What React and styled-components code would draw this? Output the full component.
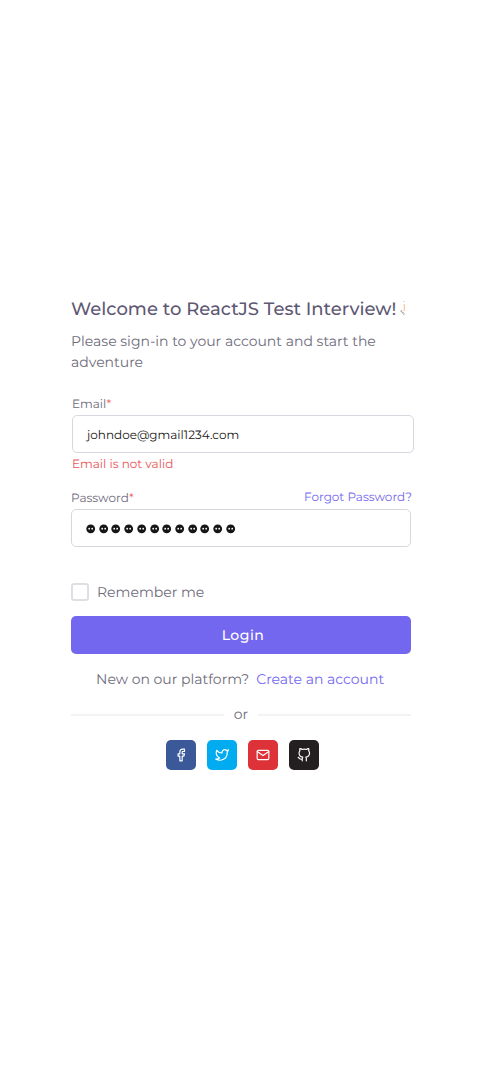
import React from "react";
import styled, { createGlobalStyle } from "styled-components";
import { FiFacebook, FiTwitter, FiMail, FiGithub } from "react-icons/fi";

const Global = createGlobalStyle`
  *, *::before, *::after { box-sizing: border-box; }
  body {
    margin: 0;
    background: #fff;
    font-family: Montserrat, Inter, sans-serif;
    color: #6e6b7b;
    text-rendering: geometricPrecision;
  }
`;
const Page = styled.main`
  min-height: 1080px;
  padding: 297px 73px 0 71px;
  display: flex;
  flex-direction: column;
`;
const Phrase = styled.span`
  white-space: nowrap;
  letter-spacing: ${(p) => p.$track || 0}px;
`;
const Title = styled.h1`
  margin: 0;
  height: 24px;
  display: flex;
  align-items: center;
  gap: 4px;
  font-size: 18px;
  line-height: 24px;
  font-weight: 500;
  color: #5e5873;
`;
const Spark = styled.svg`
  width: 5px;
  height: 18px;
  flex: none;
`;
const Intro = styled.p`
  margin: 10px 0 0;
  font-size: 14px;
  line-height: 21px;
`;
const Field = styled.div`
  margin: ${(p) => p.$margin};
  display: flex;
  flex-direction: column;
`;
const LabelRow = styled.div`
  display: flex;
  justify-content: space-between;
  font-size: 12px;
  line-height: 20px;
  height: ${(p) => p.$height}px;
  margin-right: -1px;
`;
const Label = styled.label`
  padding-top: ${(p) => p.$drop || 0}px;
`;
const Star = styled.span`
  color: #ea5455;
`;
const Link = styled.a`
  color: #7367f0;
  text-decoration: none;
`;
const Box = styled.div`
  height: 38px;
  padding: 2px 14px 0;
  display: flex;
  align-items: center;
  border: 1px solid #d8d6de;
  border-radius: 5px;
  color: #161616;
  font-size: 12px;
`;
const ErrorText = styled.div`
  height: 22px;
  line-height: 24px;
  font-size: 12px;
  color: #ea5455;
`;
const Mask = styled.div`
  display: flex;
  gap: 2.73px;
  padding-bottom: 1px;
  svg { width: 10px; height: 10px; }
`;
const Remember = styled.label`
  margin-top: 35px;
  height: 20px;
  display: flex;
  align-items: center;
  gap: 8px;
  font-size: 14px;
`;
const Check = styled.span`
  width: 18px;
  height: 18px;
  border: 2px solid #e0dee5;
  border-radius: 3px;
`;
const Submit = styled.button`
  margin-top: 14px;
  height: 38px;
  padding: 0 0 0 4px;
  border: 0;
  border-radius: 5px;
  background: #7367f0;
  color: #fff;
  font: 500 14px Montserrat, Inter, sans-serif;
  text-rendering: geometricPrecision;
`;
const Join = styled.p`
  margin: 14px 0 0;
  height: 22px;
  line-height: 22px;
  padding-left: 25px;
  display: flex;
  gap: 7px;
  font-size: 14px;
`;
const Divider = styled.div`
  margin-top: 14px;
  height: 21px;
  display: flex;
  align-items: center;
  gap: 10px;
  font-size: 14px;
  line-height: 21px;
  &::before, &::after { content: ""; flex: 1; height: 2px; background: #f3f2f4; }
`;
const Socials = styled.div`
  margin: 15px 0 0 94.5px;
  display: flex;
  gap: 11px;
`;
const Social = styled.button`
  flex: none;
  width: 30px;
  height: 30px;
  padding: 0;
  display: grid;
  place-items: center;
  border: 0;
  border-radius: 5px;
  background: ${(p) => p.$bg};
  color: #fff;
`;

const MaskDot = () => (
  <svg viewBox="0 0 10 10">
    <ellipse cx="4.7" cy="4.8" rx="4.4" ry="4.4" fill="#161616" />
    <circle cx="3.2" cy="4.7" r=".9" fill="#fff" />
    <circle cx="6.2" cy="4.7" r=".9" fill="#fff" />
  </svg>
);

export default function App() {
  return (
    <>
      <Global />
      <Page>
        <Title>
          <Phrase>Welcome to ReactJS Test Interview!</Phrase>
          <Spark viewBox="0 0 5 18">
            <path d="M4.3 1v11" stroke="#ffcba4" strokeWidth="1.4" strokeDasharray="1 2 7 1" />
            <path d="M.8 10.5l3.5 4" stroke="#aaa7aa" strokeWidth="1.8" strokeDasharray="1.5 .6" />
          </Spark>
        </Title>
        <Intro>Please sign-in to your account and start the adventure</Intro>
        <Field $margin="22px -3px 0 1px">
          <LabelRow $height={20}>
            <Label>Email<Star>*</Star></Label>
          </LabelRow>
          <Box>johndoe@gmail1234.com</Box>
          <ErrorText>Email is not valid</ErrorText>
        </Field>
        <Field $margin="13px 0 0 0">
          <LabelRow $height={21}>
            <Label $drop={1}>Password<Star>*</Star></Label>
            <Link>Forgot Password?</Link>
          </LabelRow>
          <Box>
            <Mask>{Array.from({ length: 12 }, (_, i) => <MaskDot key={i} />)}</Mask>
          </Box>
        </Field>
        <Remember><Check />Remember me</Remember>
        <Submit><Phrase $track={0.5}>Login</Phrase></Submit>
        <Join>
          <Phrase>New on our platform?</Phrase>
          <Link><Phrase>Create an account</Phrase></Link>
        </Join>
        <Divider><Phrase>or</Phrase></Divider>
        <Socials>
          <Social $bg="#3b5998"><FiFacebook size={14} /></Social>
          <Social $bg="#00abf0"><FiTwitter size={14} /></Social>
          <Social $bg="#dd3237"><FiMail size={14} /></Social>
          <Social $bg="#231f20"><FiGithub size={14} /></Social>
        </Socials>
      </Page>
    </>
  );
}
